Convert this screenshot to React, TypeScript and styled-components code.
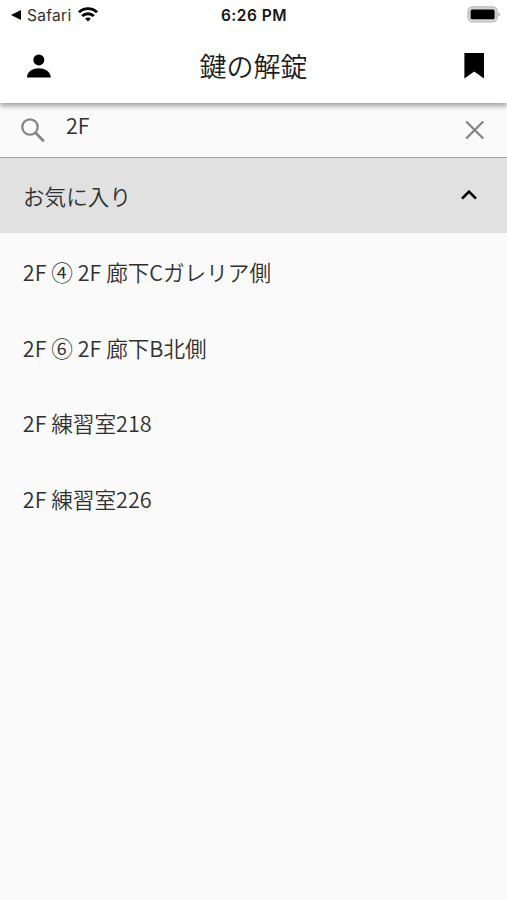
import React from "react";
import styled, { createGlobalStyle } from "styled-components";

const GlobalStyle = createGlobalStyle`
  * { box-sizing: border-box; }
  body { margin: 0; background: #fafafa; }
`;

const Screen = styled.div`
  width: 507px;
  height: 900px;
  display: flex;
  flex-direction: column;
  overflow: hidden;
  background: #fafafa;
  color: #303030;
  font-family: "Noto Sans CJK JP", sans-serif;
  font-size: 21.6px;
  font-weight: 350;
`;

const Header = styled.header`
  flex: none;
  height: 103px;
  background: #fff;
  box-shadow: 0 3px 5px 0 rgba(0, 0, 0, 0.36);
  z-index: 1;
`;

const StatusBar = styled.div`
  height: 30px;
  display: grid;
  grid-template-columns: 1fr auto 1fr;
  align-items: center;
  padding: 0 8px 0 11px;
  font-family: Inter, sans-serif;
`;

const BackLink = styled.div`
  display: flex;
  align-items: center;
  font-size: 15.5px;
  font-weight: 400;
  letter-spacing: 0.3px;
  color: #303030;
  svg { display: block; }
`;

const AppName = styled.span`
  margin: 0 7px 0 6px;
`;

const Clock = styled.div`
  margin-left: -2px;
  font-size: 15.5px;
  font-weight: 600;
  letter-spacing: 0.5px;
  color: #161616;
`;

const BatterySlot = styled.div`
  display: flex;
  justify-content: flex-end;
  padding-bottom: 2px;
  margin-right: -2px;
`;

const TitleBar = styled.div`
  height: 71px;
  display: grid;
  grid-template-columns: 24px 1fr 24px;
  align-items: center;
  padding: 0 21px 0 27px;
  svg { display: block; }
`;

const Title = styled.h1`
  margin: 0;
  padding-right: 6px;
  text-align: center;
  font-size: 27px;
  line-height: 40px;
  font-weight: 350;
  color: #1c1c1c;
`;

const SearchBar = styled.div`
  flex: none;
  height: 55px;
  display: flex;
  align-items: flex-start;
  padding: 0 22px 0 21px;
  border-bottom: 1px solid #a0a0a0;
`;

const SearchIcon = styled.svg`
  margin-top: 15px;
  display: block;
`;

const Query = styled.div`
  flex: 1;
  margin: 6px 0 0 21px;
  line-height: 32px;
`;

const ClearIcon = styled.svg`
  margin-top: 17px;
  display: block;
`;

const SectionHeader = styled.div`
  flex: none;
  height: 75px;
  display: flex;
  align-items: center;
  justify-content: space-between;
  padding: 0 29px 0 23px;
  background: #e1e1e1;
`;

const List = styled.ul`
  list-style: none;
  margin: 0;
  padding: 1px 0 0;
`;

const Item = styled.li`
  height: 75.5px;
  display: flex;
  align-items: center;
  padding: 0 22.8px;
  white-space: pre;
`;

const rooms = ["2F ④ 2F 廊下Cガレリア側", "2F ⑥ 2F 廊下B北側", "2F 練習室218", "2F 練習室226"];

export default function App() {
  return (
    <Screen>
      <GlobalStyle />
      <Header>
        <StatusBar>
          <BackLink>
            <svg width="10" height="10" viewBox="0 0 10 10">
              <path d="M0 5 10 0v10Z" fill="#000" />
            </svg>
            <AppName>Safari</AppName>
            <svg width="20" height="16" viewBox="0 0 20 16">
              <g fill="none" stroke="#000" strokeWidth="2.8">
                <path d="M1 5.2a13 13 0 0 1 18 0" />
                <path d="M4.2 9.1a8.3 8.3 0 0 1 11.6 0" />
              </g>
              <path d="m10 14.6-2.9-2.8a4 4 0 0 1 5.8 0Z" fill="#000" />
            </svg>
          </BackLink>
          <Clock>6:26 PM</Clock>
          <BatterySlot>
            <svg width="34" height="17" viewBox="0 0 34 17">
              <rect x="1" y="0.8" width="29.2" height="15" rx="4.6" fill="#d6d6d6" stroke="#bcbcbc" strokeWidth="1.3" />
              <rect x="3.6" y="3.4" width="24" height="9.8" rx="1.5" fill="#000" />
              <path d="M31.5 6.500q1.500.6 1.500 2T31.500 10.500Z" fill="#a9a9a9" />
            </svg>
          </BatterySlot>
        </StatusBar>
        <TitleBar>
          <svg width="24" height="24" viewBox="0 0 24 24">
            <circle cx="11.8" cy="5.9" r="5.5" />
            <path d="M0 23.4v-1.2c1-5.2 6-8 11.8-8s10.8 2.8 11.8 8v1.2Z" />
          </svg>
          <Title>鍵の解錠</Title>
          <svg width="24" height="26" viewBox="0 0 24 26">
            <path d="M2.4 0h19.6v25.5l-9.8-7-9.8 7Z" />
          </svg>
        </TitleBar>
      </Header>
      <SearchBar>
        <SearchIcon width="24" height="25" viewBox="0 0 24 25" fill="none" stroke="#858585">
          <circle cx="9" cy="9" r="7.700" strokeWidth="2.3" />
          <path d="m14.5 14.8 8.3 8.4" strokeWidth="2.8" />
        </SearchIcon>
        <Query>2F</Query>
        <ClearIcon width="20" height="20" viewBox="0 0 20 20" fill="none" stroke="#858585" strokeWidth="2.3">
          <path d="m1.200 1.5 17 17m0-17-17 17" />
        </ClearIcon>
      </SearchBar>
      <SectionHeader>
        <span>お気に入り</span>
        <svg width="18" height="12" viewBox="0 0 18 12">
          <path d="m2 8.700 7-7 7 7" fill="none" stroke="#000" strokeWidth="2.6" />
        </svg>
      </SectionHeader>
      <List>
        {rooms.map((room) => (
          <Item key={room}>{room}</Item>
        ))}
      </List>
    </Screen>
  );
}
